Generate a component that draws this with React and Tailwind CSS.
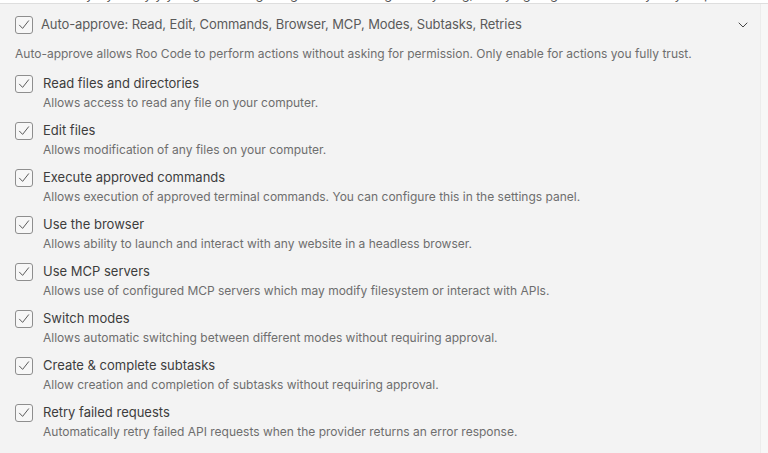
import { ChevronDown } from "lucide-react";

const items = [
  ["Read files and directories", "Allows access to read any file on your computer."],
  ["Edit files", "Allows modification of any files on your computer."],
  ["Execute approved commands", "Allows execution of approved terminal commands. You can configure this in the settings panel."],
  ["Use the browser", "Allows ability to launch and interact with any website in a headless browser."],
  ["Use MCP servers", "Allows use of configured MCP servers which may modify filesystem or interact with APIs."],
  ["Switch modes", "Allows automatic switching between different modes without requiring approval."],
  ["Create & complete subtasks", "Allow creation and completion of subtasks without requiring approval."],
  ["Retry failed requests", "Automatically retry failed API requests when the provider returns an error response."],
];

function Check() {
  return (
    <div className="w-[18px] h-[18px] shrink-0 rounded-[3px] border border-[#8e8e8e] bg-[#f7f7f7] flex items-center justify-center">
      <svg width="14" height="14" viewBox="0 0 14 14" fill="none">
        <path d="M2.5 7.2 L5.6 10.4 L11.6 2.8" stroke="#5a5a5a" strokeWidth="1" strokeLinecap="round" strokeLinejoin="round" />
      </svg>
    </div>
  );
}

export default function App() {
  return (
    <div className="w-[768px] h-[453px] overflow-hidden bg-[#f3f3f3] font-['Inter',sans-serif] flex flex-col">
      {/* bottom edge of the message above, scrolled out of view */}
      <div className="h-[3px] shrink-0 bg-white overflow-hidden border-b border-[#dedede] box-content">
        <div className="-mt-[14px] pl-[40px] text-[13px] leading-[16px] text-[#555] whitespace-nowrap">
          Roo may try every y you give it hang things before asking for anything, so trying to guide it carefully may help
        </div>
      </div>

      <div className="flex flex-1">
        <div className="flex-1 pl-[15px] pr-[9px]">
          {/* header */}
          <div className="flex items-center h-[40px] pt-[2px]">
            <Check />
            <span className="ml-[8px] text-[13px] text-[#5a5a5a] tracking-[-0.1px]">
              Auto-approve: Read, Edit, Commands, Browser, MCP, Modes, Subtasks, Retries
            </span>
            <ChevronDown className="ml-auto w-[16px] h-[16px] text-[#444]" strokeWidth={1.5} />
          </div>
          <p className="mt-[2px] text-[12px] leading-[16px] text-[#6e6e6e]">
            Auto-approve allows Roo Code to perform actions without asking for permission. Only enable for actions you fully trust.
          </p>

          <div className="mt-[13px] flex flex-col">
            {items.map(([title, desc]) => (
              <div key={title} className="h-[47px]">
                <div className="flex items-center h-[18px]">
                  <Check />
                  <span className="ml-[10px] text-[13px] text-[#3d3d3d]">{title}</span>
                </div>
                <div className="ml-[28px] mt-[2px] text-[12px] leading-[16px] text-[#6e6e6e]">{desc}</div>
              </div>
            ))}
          </div>
        </div>
        <div className="w-[8px] border-l border-[#ececec] bg-[#f7f7f7]" />
      </div>
    </div>
  );
}
